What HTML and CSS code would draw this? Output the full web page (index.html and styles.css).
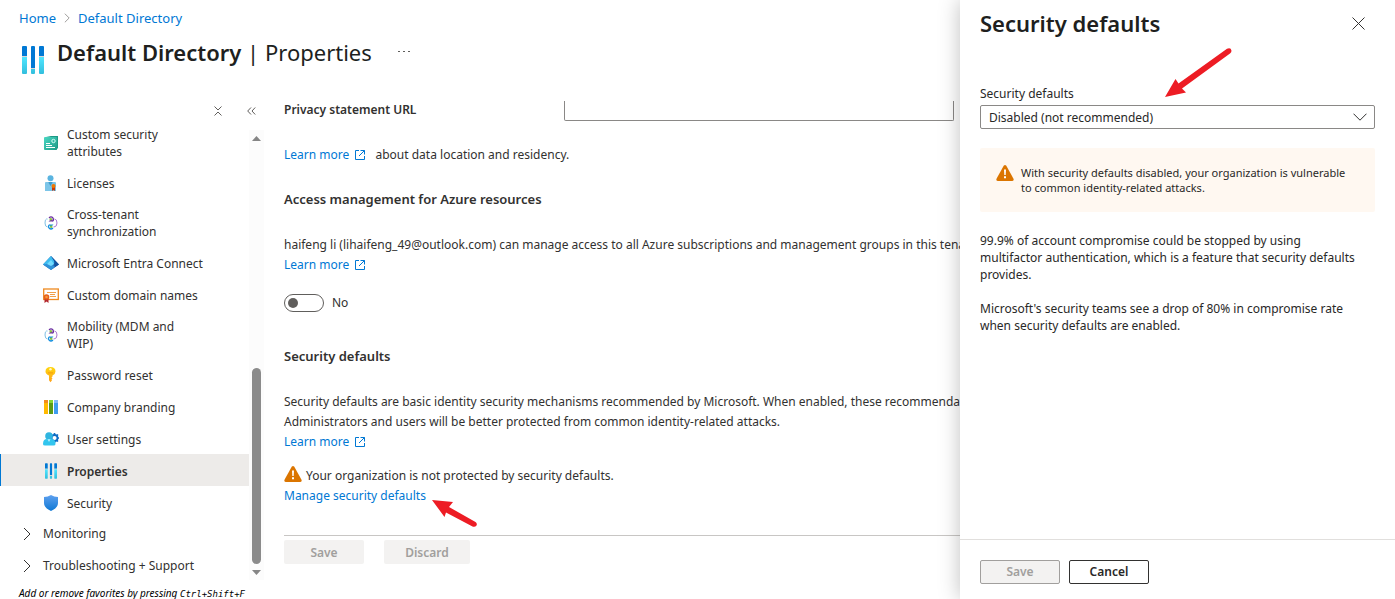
FILE: index.html
```
<!DOCTYPE html>
<html lang="en">
<head>
<meta charset="utf-8">
<title>Default Directory | Properties</title>
<link rel="stylesheet" href="styles.css">
</head>
<body>
<svg class="defs" aria-hidden="true">
  <defs>
    <linearGradient id="g-cyan" x1="0" y1="1" x2="0" y2="0"><stop offset="0" stop-color="#32bedd"/><stop offset="1" stop-color="#50e6ff"/></linearGradient>
    <linearGradient id="g-teal" x1="0" y1="0" x2="1" y2="1"><stop offset="0" stop-color="#4ad8c3"/><stop offset="1" stop-color="#1d9a86"/></linearGradient>
    <linearGradient id="g-shield" x1="0" y1="0" x2="0" y2="1"><stop offset="0" stop-color="#5ea0ef"/><stop offset="1" stop-color="#0f78d4"/></linearGradient>
    <linearGradient id="g-key" x1="0" y1="0" x2="0" y2="1"><stop offset="0" stop-color="#ffd70f"/><stop offset="1" stop-color="#fea11b"/></linearGradient>
    <symbol id="properties" viewBox="0 0 22 28">
      <path fill="#0078d4" d="M0 1q0-1 1-1h3q1 0 1 1v9H0zM17 1q0-1 1-1h3q1 0 1 1v9h-5zM9 1q0-1 1-1h2q1 0 1 1v21H9z"/>
      <path fill="#d8d8d8" d="M0 10h5v1H0zM17 10h5v1h-5zM9 22h4v1H9z"/>
      <path fill="url(#g-cyan)" d="M0 11h5v16q0 1-1 1H1q-1 0-1-1zM17 11h5v16q0 1-1 1h-3q-1 0-1-1zM9 23h4v4q0 1-1 1h-2q-1 0-1-1z"/>
    </symbol>
    <symbol id="external" viewBox="0 0 10 10">
      <path fill="none" stroke="currentColor" d="M4 .5H.5v9h9V6M5.500.5h4v4M9.500.5L4 6"/>
    </symbol>
    <symbol id="warning" viewBox="0 0 18 16">
      <path fill="#db7500" d="M7.700.8q1.300-1.600 2.600 0l7.200 13q.7 1.900-1.100 2.100H1.600Q-.2 15.700.5 13.800z"/>
      <path fill="#fff" d="M8 4.500h2l-.3 5.500H8.300zM8 11.200h2v2H8z"/>
    </symbol>
    <symbol id="chevron" viewBox="0 0 8 14"><path fill="none" stroke="currentColor" d="M1 1l6 6-6 6"/></symbol>
    <symbol id="sync" viewBox="0 0 14 14">
      <path fill="none" stroke="#7fbfe4" d="M3.500 3H2.500Q1 3.200 1 7t2.500 4"/>
      <path fill="none" stroke="#a878cf" d="M10.500 3q2.500.2 2.500 4t-3 4H9.500"/>
      <path fill="none" stroke="#6b2fa0" stroke-width="1.200" d="M5 2Q7-.2 9 2q1.200 2-.5 3.200"/>
      <path fill="none" stroke="#1490df" stroke-width="1.200" d="M9 12Q7 14 5 12q-1.200-2 .5-3.200"/>
      <path fill="#6b2fa0" d="M4.500 5.500h4.500l-1-3z"/><path fill="#1490df" d="M5 8.500h4.500l-3 3z"/>
      <circle cx="6.800" cy="3.300" r="1.200" fill="#8cc63f"/><circle cx="7.200" cy="10.800" r="1.200" fill="#8cc63f"/>
    </symbol>
  </defs>
</svg>

<header class="top">
  <nav class="crumbs" aria-label="Breadcrumb">
    <a href="#">Home</a>
    <svg class="crumb-sep"><use href="#chevron"/></svg>
    <a href="#">Default Directory</a>
  </nav>
  <div class="heading">
    <svg class="heading-icon"><use href="#properties"/></svg>
    <h1><strong>Default Directory</strong> | Properties</h1>
    <button class="more" aria-label="More">
      <svg width="12" height="2" viewBox="0 0 12 2" fill="#605e5c"><path d="M0 0h2v1H0zM5 0h2v1H5zM10 0h2v1h-2z"/></svg>
    </button>
  </div>
</header>

<div class="body">
  <aside class="side">
    <div class="side-tools">
      <button aria-label="Collapse groups"><svg width="8" height="10" viewBox="0 0 8 10" fill="none" stroke="#605e5c"><path d="M.5.5L4 4 7.500.5M.5 9.500L4 6l3.500 3.500"/></svg></button>
      <button aria-label="Collapse menu"><svg width="9" height="8" viewBox="0 0 9 8" fill="none" stroke="#605e5c"><path d="M4 .5L.7 4 4 7.500M8.200.5L5 4l3.200 3.500"/></svg></button>
    </div>
    <div class="side-scroll">
      <ul class="menu">
        <li><a class="item tall" href="#">
          <svg viewBox="0 0 16 16"><path fill="#1d9a86" d="M3 1h12v12l-2 2V3z"/><rect x="1" y="2" width="13" height="13" rx="1" fill="url(#g-teal)"/><path stroke="#fff" d="M3 8.500h4M3 10.500h6M3 12.500h9"/><circle cx="10.500" cy="6" r="1.700" fill="none" stroke="#d5fff7"/></svg>
          <span>Custom security attributes</span></a></li>
        <li><a class="item" href="#">
          <svg viewBox="0 0 16 16"><circle cx="7.500" cy="3.200" r="3" fill="#5ab4e0"/><path fill="#7cc5e8" d="M2 8q0-1 1-1h2l2.500 3L10 7h2q1 0 1 1v8H2z"/><path fill="#3b9cd0" d="M5 7l2.500 4L10 7z"/><path fill="#c8380a" d="M9 12h3v4l-1.500-1L9 16z"/><circle cx="10.500" cy="11" r="2" fill="#f07800"/></svg>
          <span>Licenses</span></a></li>
        <li><a class="item tall" href="#">
          <svg viewBox="-1 -1 16 16"><use href="#sync" width="14" height="14"/></svg>
          <span>Cross-tenant synchronization</span></a></li>
        <li><a class="item" href="#">
          <svg viewBox="0 0 16 16"><path fill="#1f5fae" d="M8 1l8 8.500-8 5.500-8-5.500z"/><path fill="#3dbdf0" d="M8 1l4 6-4 6-8-3.500z"/><path fill="#1453a0" d="M8 1l8 8.500-4 2.500-1-6z"/><path fill="#2f92d8" d="M0 9.500l8-1.500 4 4-4 3z"/><path fill="#74dcff" d="M8 5l3 4-3 2-4-2z"/></svg>
          <span>Microsoft Entra Connect</span></a></li>
        <li><a class="item" href="#">
          <svg viewBox="0 0 16 16"><rect x=".7" y="2" width="14.600" height="10.500" fill="#fff" stroke="#ef8a20" stroke-width="1.300"/><path stroke="#f0a04b" d="M4 5.500h9M7 7.500h5M7 9.500h6"/><path fill="#b3282d" d="M1.500 11h4v5l-2-1.500-2 1.500z"/><circle cx="3.500" cy="10" r="2.800" fill="#e8601c"/><circle cx="3.500" cy="10" r="1.300" fill="#f59a3c"/></svg>
          <span>Custom domain names</span></a></li>
        <li><a class="item tall" href="#">
          <svg viewBox="-1 -1 16 16"><use href="#sync" width="14" height="14"/></svg>
          <span>Mobility (MDM and WIP)</span></a></li>
        <li><a class="item" href="#">
          <svg viewBox="0 0 16 16"><path fill="url(#g-key)" d="M7.500 0Q12.500 0 12.500 4.500 12.500 7 9.500 8.500v1l-1 1 1 1-1 1 .5.800-1.500 2-1.500-2V8.500Q2.500 7 2.500 4.500 2.500 0 7.500 0z"/><circle cx="7.500" cy="2.300" r="1.200" fill="#fff6c8"/><path fill="#f0940a" d="M5 5.500h5v.8H5z"/></svg>
          <span>Password reset</span></a></li>
        <li><a class="item" href="#">
          <svg viewBox="0 0 16 16"><path fill="#ffb900" d="M1 1h4v14H1z"/><path fill="#f28c1c" d="M1 1h4v3H1z"/><path fill="#5c9a18" d="M6 1h4v14H6z"/><path fill="#86d633" d="M6 1h4v3H6z"/><path fill="#3f9cf0" d="M11 1h4v14h-4z"/><path fill="#83b9f9" d="M11 1h4v3h-4z"/></svg>
          <span>Company branding</span></a></li>
        <li><a class="item" href="#">
          <svg viewBox="0 0 16 16"><circle cx="11.500" cy="7" r="3" fill="none" stroke="#0f6cc4" stroke-width="1.800"/><path stroke="#0f6cc4" stroke-width="1.600" d="M11.500 2v2M11.500 10v2M14 7h2M13.500 5l1.500-1.500M13.500 9l1.500 1.500"/><circle cx="6" cy="5" r="3.800" fill="#2fb5e0"/><path fill="#32c5ee" d="M0 13q0-5 4-5h4.500q4 0 4 5 0 1.500-2 1.500H2Q0 14.500 0 13z"/><path fill="#b9f0ff" d="M4.500 8.300h3L6 11z"/></svg>
          <span>User settings</span></a></li>
        <li><a class="item current" href="#" aria-current="page">
          <svg viewBox="0 0 16 16"><use href="#properties" x="2" width="12" height="16"/></svg>
          <span>Properties</span></a></li>
        <li><a class="item" href="#">
          <svg viewBox="0 0 16 16"><path fill="url(#g-shield)" d="M8 0q3 2 7 2v6q0 5-7 8-7-3-7-8V2q4 0 7-2z"/></svg>
          <span>Security</span></a></li>
        <li><button class="group"><svg><use href="#chevron"/></svg>Monitoring</button></li>
        <li><button class="group"><svg><use href="#chevron"/></svg>Troubleshooting + Support</button></li>
      </ul>
      <div class="track">
        <svg width="9" height="5" viewBox="0 0 9 5"><path fill="#858585" d="M4.500 0L9 5H0z"/></svg>
        <div class="thumb"></div>
        <svg width="9" height="5" viewBox="0 0 9 5"><path fill="#858585" d="M0 0h9L4.500 5z"/></svg>
      </div>
    </div>
    <p class="hint">Add or remove favorites by pressing <kbd>Ctrl+Shift+F</kbd></p>
  </aside>

  <main class="content">
    <div class="field">
      <label for="privacy">Privacy statement URL</label>
      <input id="privacy" type="text">
    </div>
    <p class="residency"><a href="#">Learn more <svg class="ext"><use href="#external"/></svg></a> <span>about data location and residency.</span></p>
    <h2>Access management for Azure resources</h2>
    <p>haifeng li (lihaifeng_49@outlook.com) can manage access to all Azure subscriptions and management groups in this tenant.</p>
    <p><a href="#">Learn more <svg class="ext"><use href="#external"/></svg></a></p>
    <label class="toggle"><input type="checkbox" role="switch"><span>No</span></label>
    <h2>Security defaults</h2>
    <p>Security defaults are basic identity security mechanisms recommended by Microsoft. When enabled, these recommendations</p>
    <p>Administrators and users will be better protected from common identity-related attacks.</p>
    <p><a href="#">Learn more <svg class="ext"><use href="#external"/></svg></a></p>
    <p class="alert"><svg class="warn"><use href="#warning"/></svg>Your organization is not protected by security defaults.</p>
    <p><a href="#">Manage security defaults</a></p>
    <div class="actions">
      <button disabled>Save</button>
      <button disabled>Discard</button>
    </div>
  </main>
</div>

<section class="panel" aria-labelledby="panel-title">
  <div class="panel-head">
    <h2 id="panel-title">Security defaults</h2>
    <button aria-label="Close"><svg width="13" height="13" viewBox="0 0 13 13" stroke="#323130"><path d="M.5.5l12 12M12.500.5l-12 12"/></svg></button>
  </div>
  <div class="panel-body">
    <label for="defaults">Security defaults</label>
    <div class="select">
      <select id="defaults"><option>Disabled (not recommended)</option><option>Enabled</option></select>
      <svg width="14" height="8" viewBox="0 0 14 8" fill="none" stroke="#323130"><path d="M.5.700L7 7.200 13.500.7"/></svg>
    </div>
    <div class="notice">
      <svg class="warn"><use href="#warning"/></svg>
      <p>With security defaults disabled, your organization is vulnerable to common identity-related attacks.</p>
    </div>
    <p class="para">99.9% of account compromise could be stopped by using multifactor authentication, which is a feature that security defaults provides.</p>
    <p class="para">Microsoft's security teams see a drop of 80% in compromise rate when security defaults are enabled.</p>
  </div>
  <div class="panel-foot">
    <button disabled>Save</button>
    <button>Cancel</button>
  </div>
</section>

<svg class="arrow arrow-select" viewBox="0 0 68 50" fill="#ed1c24"><path d="M0 49L10.500 31l3 4.500L62 .8q4-1.500 4.500 2 0 1.500-1.500 2.700L17 40.500l4 4z"/></svg>
<svg class="arrow arrow-manage" viewBox="0 0 46 27" fill="#ed1c24"><path d="M0 0l21 2-4 5 26.500 15q2 1.500 1 3.500-1.500 2-4 1L14 12.500 12.500 17z"/></svg>
</body>
</html>
```
FILE: styles.css
```
* { box-sizing: border-box; }
body {
  margin: 0;
  height: 100vh;
  display: flex;
  flex-direction: column;
  overflow: hidden;
  position: relative;
  background: #fff;
  color: #323130;
  font: 12px/20px "Noto Sans", "Open Sans", sans-serif;
}
h1, h2, p, ul { margin: 0; padding: 0; }
ul { list-style: none; }
a { color: #0078d4; text-decoration: none; }
button { font: inherit; color: inherit; background: none; border: 0; padding: 0; display: flex; align-items: center; justify-content: center; }
svg { flex: none; }
.defs { position: absolute; width: 0; height: 0; }

.top { height: 101px; padding: 8px 19px 0; flex: none; }
.crumbs { display: flex; align-items: center; gap: 8px; font-size: 13px; }
.crumb-sep { width: 6px; height: 10px; color: #797775; }
.heading { display: flex; align-items: center; padding: 1px 0 0 3px; }
.heading-icon { width: 22px; height: 28px; margin: 17px 13px 0 0; }
h1 { font-size: 22px; line-height: 32px; font-weight: 400; color: #201f1e; }
h1 strong { font-weight: 600; }
.more { margin-left: 26px; width: 12px; height: 20px; }

.body { flex: 1; min-height: 0; display: flex; }
.side { width: 264px; flex: none; display: flex; flex-direction: column; }
.side-tools { height: 29px; flex: none; display: flex; justify-content: flex-end; align-items: flex-start; gap: 25px; padding: 5px 8px 0 0; }
.side-tools button { height: 10px; }
.side-scroll { flex: 1; min-height: 0; display: flex; }
.menu { flex: 1; margin-top: -12px; clip-path: inset(12px 0 0 0); }
.item { display: flex; align-items: center; gap: 8px; height: 32px; padding: 2px 0 0 42px; line-height: 17px; color: #323130; border-left: 1px solid transparent; }
.item svg { width: 16px; height: 16px; }
.item span { width: 150px; }
.tall { height: 48px; }
.item.tall span { width: 125px; }
.current { background: #edebe9; border-left-color: #0078d4; font-weight: 600; }
.group { height: 32px; padding-left: 23px; gap: 12px; }
.group svg { width: 8px; height: 14px; }
.track { width: 15px; background: #fcfcfc; display: flex; flex-direction: column; align-items: center; padding: 6px 0 5px; gap: 6px; }
.thumb { width: 9px; height: 196px; border-radius: 5px; background: #8b8b8b; margin-top: auto; }
.hint { padding: 5px 0 0 19px; height: 19px; font-size: 10px; line-height: 17px; font-style: italic; color: #000; white-space: nowrap; }
kbd { font: italic 9px "DejaVu Sans Mono", monospace; }

.content { flex: 1; min-width: 0; padding-left: 20px; white-space: nowrap; overflow: hidden; display: flex; flex-direction: column; }
.field { display: flex; align-items: flex-start; margin-bottom: 24px; }
.field label { width: 280px; line-height: 18px; font-weight: 600; }
.field input { width: 390px; height: 20px; border: 1px solid #8a8886; border-top: 0; border-radius: 0 0 2px 2px; font: inherit; }
.ext { width: 10px; height: 10px; margin-left: 3px; vertical-align: -1px; }
.residency span { margin-left: 7px; }
.content h2 { margin: 24px 0 26px; font-size: 13px; line-height: 20px; font-weight: 600; }
.toggle { display: flex; align-items: center; gap: 8px; margin: 18px 0 9px; height: 20px; }
.toggle input { appearance: none; margin: 0; width: 40px; height: 18px; border: 1px solid #605e5c; border-radius: 9px; padding: 3px; }
.toggle input::before { content: ""; display: block; width: 10px; height: 10px; border-radius: 50%; background: #605e5c; }
.warn { width: 18px; height: 16px; }
.alert { display: flex; align-items: center; gap: 4px; margin-top: 14px; }
.alert .warn { margin-bottom: 4px; }
.actions { display: flex; gap: 20px; margin-top: 29px; padding-top: 4px; border-top: 1px solid #c8c6c4; }
.actions button { width: 80px; height: 24px; padding-top: 2px; border-radius: 2px; background: #f3f2f1; color: #a19f9d; font-weight: 600; }
.actions button + button { width: 86px; }

.panel { position: absolute; top: 0; right: 0; bottom: 0; width: 435px; display: flex; flex-direction: column; background: #fff; color: #292827; box-shadow: 0 0 20px rgba(0, 0, 0, .25); }
.panel-head { display: flex; justify-content: space-between; align-items: center; padding: 7px 30px 0 20px; }
.panel-head h2 { font-size: 22px; line-height: 32px; font-weight: 600; color: #201f1e; }
.panel-body { flex: 1; padding: 45px 20px 0; }
.panel-body label { display: block; }
.select { position: relative; margin: 1px 0 19px; }
.select select { appearance: none; display: block; width: 100%; height: 24px; padding: 1px 8px 0; border: 1px solid #8a8886; border-radius: 2px; background: #fff; color: inherit; font: inherit; }
.select svg { position: absolute; right: 8px; top: 8px; pointer-events: none; }
.notice { display: flex; gap: 7px; padding: 17px 20px 17px 16px; margin-bottom: 20px; background: #fff8f1; border-radius: 2px; font-size: 11px; line-height: 15px; }
.para { line-height: 17px; margin-bottom: 17px; padding-right: 12px; }
.panel-foot { display: flex; gap: 9px; padding: 20px 20px 15px; border-top: 1px solid #e1dfdd; }
.panel-foot button { width: 80px; height: 24px; border: 1px solid #323130; border-radius: 2px; font-weight: 600; }
.panel-foot button:disabled { border-color: #a19f9d; background: #f3f2f1; color: #a19f9d; }

.arrow { position: absolute; pointer-events: none; }
.arrow-select { left: 1165px; top: 48px; width: 68px; height: 50px; }
.arrow-manage { left: 432px; top: 500px; width: 46px; height: 27px; }
```
